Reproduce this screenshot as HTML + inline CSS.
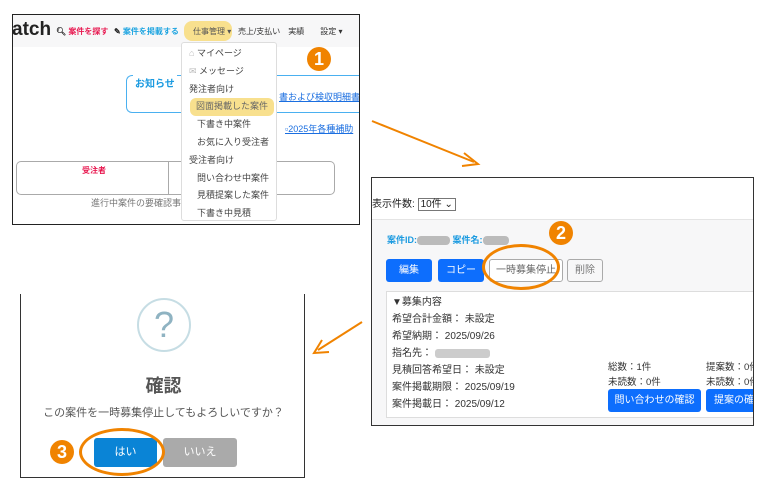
<!DOCTYPE html>
<html><head><meta charset="utf-8"><style>
*{margin:0;padding:0;box-sizing:border-box}
body{width:770px;height:500px;background:#fff;position:relative;overflow:hidden;font-family:"Liberation Sans","Noto Sans CJK JP",sans-serif;color:#333}
.a{position:absolute;white-space:nowrap}
.badge{position:absolute;width:24px;height:24px;border-radius:50%;background:#f08300;color:#fff;font-weight:bold;font-size:18px;text-align:center;line-height:24px}
.btn{position:absolute;border-radius:3px;font-size:10px;text-align:center}
</style></head><body>
<!-- panel 1 -->
<div class="a" style="left:12px;top:14px;width:348px;height:211px;border:1px solid #222;overflow:hidden">
 <div class="a" style="left:0;top:0;width:348px;height:32px;background:#f7f7f8"></div>
 <div class="a" style="left:-1px;top:4px;font-size:19px;font-weight:bold;color:#222">atch</div>
 <div class="a" style="left:43px;top:11px;font-size:8px;color:#e8174f;font-weight:bold"><span style="color:#222">&#x1F50D;&#xFE0E;</span> 案件を探す</div>
 <div class="a" style="left:101px;top:11px;font-size:8px;color:#1aa3e0;font-weight:bold"><span style="color:#222">✎</span> 案件を掲載する</div>
 <div class="a" style="left:171px;top:6px;width:48px;height:20px;border-radius:8px;background:#f8e08e"></div>
 <div class="a" style="left:180px;top:11px;font-size:8px;color:#555">仕事管理 ▾</div>
 <div class="a" style="left:225px;top:11px;font-size:8px;color:#333">売上/支払い　実績　　設定 ▾</div>
 <div class="a" style="left:168px;top:27px;width:96px;height:179px;background:#fff;border:1px solid #ddd;border-radius:3px"></div>
 <div class="a" style="left:176px;top:30px;font-size:9px;line-height:17.8px;color:#444">
  <div><span style="color:#bbb">⌂</span> マイページ</div>
  <div><span style="color:#bbb">✉</span> メッセージ</div>
  <div>発注者向け</div>
  <div style="margin-left:1px;background:#f8e08e;border-radius:6px;padding:0 6px;width:84px;color:#666">図面掲載した案件</div>
  <div style="padding-left:8px">下書き中案件</div>
  <div style="padding-left:8px">お気に入り受注者</div>
  <div>受注者向け</div>
  <div style="padding-left:8px">問い合わせ中案件</div>
  <div style="padding-left:8px">見積提案した案件</div>
  <div style="padding-left:8px">下書き中見積</div>
 </div>
 <div class="a" style="left:113px;top:60px;width:55px;height:38px;border:1px solid #4ab0f0;border-right:none;border-radius:6px 0 0 6px"></div>
 <div class="a" style="left:264px;top:60px;width:90px;height:38px;border:1px solid #4ab0f0;border-left:none;border-radius:0 6px 6px 0"></div>
 <div class="a" style="left:120px;top:60px;font-size:10px;color:#1a9ae0;font-weight:bold;background:#fff;padding:0 2px">お知らせ</div>
 <div class="a" style="left:266px;top:75px;font-size:9px;color:#1a6ee0;text-decoration:underline">書および検収明細書</div>
 <div class="a" style="left:272px;top:107px;font-size:9px;color:#1a6ee0;text-decoration:underline">▫2025年各種補助</div>
 <div class="a" style="left:3px;top:146px;width:152px;height:34px;border:1px solid #aaa;border-right:none;border-radius:5px 0 0 5px"></div>
 <div class="a" style="left:264px;top:146px;width:58px;height:34px;border:1px solid #aaa;border-left:none;border-radius:0 5px 5px 0"></div>
 <div class="a" style="left:155px;top:146px;width:13px;height:34px;border-left:1px solid #aaa;border-top:1px solid #aaa;border-bottom:1px solid #aaa"></div>
 <div class="a" style="left:69px;top:150px;font-size:8px;color:#e8174f;font-weight:bold">受注者</div>
 <div class="a" style="left:78px;top:181px;font-size:9px;color:#777">進行中案件の要確認事</div>
</div>
<div class="badge" style="left:307px;top:47px">1</div>
<!-- arrows -->
<svg class="a" style="left:0;top:0" width="770" height="500"><g stroke="#f08300" stroke-width="2" fill="none"><line x1="372" y1="121" x2="474" y2="162"/><polyline points="464,153 478,164 462,166" /><line x1="362" y1="322" x2="318" y2="350"/><polyline points="322,340 314,353 329,352"/></g></svg>
<!-- panel 2 -->
<div class="a" style="left:371px;top:177px;width:383px;height:249px;border:1px solid #333;overflow:hidden">
 <div class="a" style="left:0;top:17px;font-size:10px;color:#222">表示件数: <span style="border:1px solid #777;padding:0 2px;font-size:10px">10件 ⌄</span></div>
 <div class="a" style="left:0;top:41px;width:383px;height:207px;background:#f7f7f8;border-top:1px solid #e4e4e4"></div>
 <div class="a" style="left:15px;top:55px;font-size:9px;color:#1a9ae0;font-weight:bold">案件ID:<span style="display:inline-block;width:33px;height:9px;border-radius:4px;background:#bbb;vertical-align:middle"></span> 案件名:<span style="display:inline-block;width:26px;height:9px;border-radius:4px;background:#bbb;vertical-align:middle"></span></div>
 <div class="btn" style="left:14px;top:81px;width:46px;height:23px;background:#0d6efd;color:#fff;line-height:23px">編集</div>
 <div class="btn" style="left:66px;top:81px;width:46px;height:23px;background:#0d6efd;color:#fff;line-height:23px">コピー</div>
 <div class="btn" style="left:117px;top:81px;width:74px;height:23px;border:1px solid #aaa;background:#fff;color:#666;line-height:21px">一時募集停止</div>
 <div class="btn" style="left:195px;top:81px;width:36px;height:23px;border:1px solid #aaa;background:#f7f7f8;color:#777;line-height:21px">削除</div>
 <div class="a" style="left:14px;top:113px;width:370px;height:127px;border:1px solid #ddd;background:#fff"></div>
 <div class="a" style="left:20px;top:116px;font-size:10px;line-height:17px;color:#333">
  <div>▼募集内容</div><div>希望合計金額： 未設定</div><div>希望納期： 2025/09/26</div>
  <div>指名先： <span style="display:inline-block;width:55px;height:9px;background:#ccc;border-radius:3px;vertical-align:middle"></span></div>
  <div>見積回答希望日： 未設定</div><div>案件掲載期限： 2025/09/19</div><div>案件掲載日： 2025/09/12</div>
 </div>
 <div class="a" style="left:236px;top:182px;font-size:9.5px;line-height:15px">総数：1件<br>未読数：0件</div>
 <div class="a" style="left:334px;top:182px;font-size:9.5px;line-height:15px">提案数：0件<br>未読数：0件</div>
 <div class="btn" style="left:236px;top:211px;width:93px;height:23px;background:#0d6efd;color:#fff;line-height:23px">問い合わせの確認</div>
 <div class="btn" style="left:334px;top:211px;width:60px;height:23px;background:#0d6efd;color:#fff;line-height:23px;text-align:left;padding-left:8px">提案の確認</div>
</div>
<div class="a" style="left:482px;top:244px;width:78px;height:46px;border:3px solid #f08300;border-radius:50%"></div>
<div class="badge" style="left:549px;top:221px">2</div>
<!-- panel 3 -->
<div class="a" style="left:20px;top:294px;width:285px;height:184px;border:1px solid #333;border-top:none;overflow:hidden">
 <div class="a" style="left:116px;top:4px;width:54px;height:54px;border:2px solid #c6dde4;border-radius:50%;color:#8fb3c2;font-size:36px;text-align:center;line-height:50px">?</div>
 <div class="a" style="left:0;top:78px;width:285px;text-align:center;font-size:18px;font-weight:bold;color:#555">確認</div>
 <div class="a" style="left:0;top:110px;width:285px;text-align:center;font-size:11px;color:#555">この案件を一時募集停止してもよろしいですか？</div>
 <div class="btn" style="left:73px;top:144px;width:63px;height:29px;background:#0a84d6;color:#fff;line-height:29px;font-size:11px">はい</div>
 <div class="btn" style="left:142px;top:144px;width:74px;height:29px;background:#aaa;color:#fff;line-height:29px;font-size:11px">いいえ</div>
</div>
<div class="a" style="left:79px;top:428px;width:86px;height:48px;border:3px solid #f08300;border-radius:50%"></div>
<div class="badge" style="left:50px;top:440px">3</div>
</body></html>
